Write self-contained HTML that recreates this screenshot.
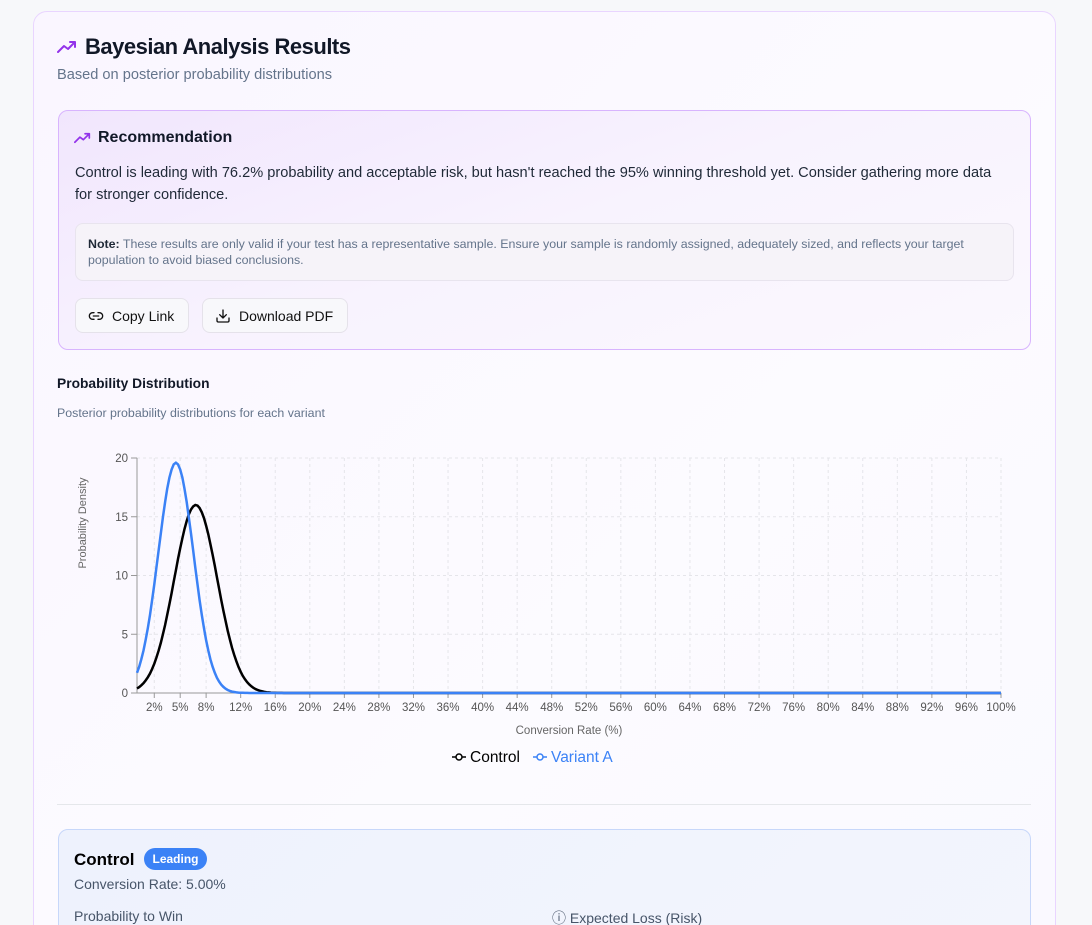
<!DOCTYPE html>
<html style="overflow:hidden;height:925px"><head><meta charset="utf-8"><style>
*{box-sizing:border-box;margin:0;padding:0}
body{width:1092px;height:925px;overflow:hidden;background:#f7f8fa;font-family:"Liberation Sans",sans-serif;position:relative}
.abs{position:absolute}
.card{left:33px;top:11px;width:1023px;height:930px;border:1px solid #e9d5ff;border-radius:14px;background:linear-gradient(135deg,#faf6ff,#fcfbff 60%,#faf9ff)}
.rec{left:58px;top:110px;width:973px;height:240px;border:1px solid #d8b4fe;border-radius:10px;background:linear-gradient(160deg,#f1e6fd,#f8f3fe 50%,#fbf8fe)}
.note{left:75px;top:223px;width:939px;height:58px;border:1px solid #e8e4ee;border-radius:8px;background:#f6f3f9;font-size:12.4px;color:#64748b;line-height:16px;padding:12px 12px}
.btn{top:298px;height:35px;border:1px solid #e5e2ea;border-radius:8px;background:#f8f8fb;font-size:14px;color:#111;display:flex;align-items:center;padding-left:12px;gap:8px}
.ctl{left:58px;top:829px;width:973px;height:120px;border:1px solid #c7d7fa;border-radius:10px;background:linear-gradient(135deg,#eef2fd,#f3f5fd)}
</style></head><body>
<div class="abs card"></div>
<svg class="abs" style="left:57px;top:40px" width="20" height="14" viewBox="0 0 20 14"><path d="M1 12 L7 6 L11 9 L18 2 M13 2 H18 V7" fill="none" stroke="#9333ea" stroke-width="2" stroke-linecap="round" stroke-linejoin="round"/></svg>
<div class="abs" style="left:85px;top:34px;font-size:22px;font-weight:bold;color:#111827;letter-spacing:-0.5px">Bayesian Analysis Results</div>
<div class="abs" style="left:57px;top:67px;font-size:14.6px;color:#64748b">Based on posterior probability distributions</div>
<div class="abs rec"></div>
<svg class="abs" style="left:74px;top:132px" width="17" height="12" viewBox="0 0 20 14"><path d="M1 12 L7 6 L11 9 L18 2 M13 2 H18 V7" fill="none" stroke="#9333ea" stroke-width="2" stroke-linecap="round" stroke-linejoin="round"/></svg>
<div class="abs" style="left:98px;top:129px;font-size:16px;font-weight:bold;color:#111827">Recommendation</div>
<div class="abs" style="left:75px;top:162px;width:930px;font-size:14.6px;line-height:22px;color:#1f2937">Control is leading with 76.2% probability and acceptable risk, but hasn't reached the 95% winning threshold yet. Consider gathering more data for stronger confidence.</div>
<div class="abs note"><b style="color:#1f2937">Note:</b> These results are only valid if your test has a representative sample. Ensure your sample is randomly assigned, adequately sized, and reflects your target population to avoid biased conclusions.</div>
<div class="abs btn" style="left:75px;width:114px"><svg width="16" height="16" viewBox="0 0 24 24" fill="none" stroke="#111" stroke-width="2" stroke-linecap="round"><path d="M9 17H7A5 5 0 0 1 7 7h2M15 7h2a5 5 0 1 1 0 10h-2M8 12h8"/></svg>Copy Link</div>
<div class="abs btn" style="left:202px;width:146px"><svg width="16" height="16" viewBox="0 0 24 24" fill="none" stroke="#111" stroke-width="2" stroke-linecap="round" stroke-linejoin="round"><path d="M21 15v4a2 2 0 0 1-2 2H5a2 2 0 0 1-2-2v-4M7 10l5 5 5-5M12 15V3"/></svg>Download PDF</div>
<div class="abs" style="left:57px;top:376px;font-size:13.8px;font-weight:bold;color:#111827">Probability Distribution</div>
<div class="abs" style="left:57px;top:406px;font-size:12.4px;color:#64748b">Posterior probability distributions for each variant</div>
<svg class="abs" style="left:0;top:440px" width="1092" height="340" id="ch"></svg>
<div class="abs" style="left:57px;top:804px;width:974px;height:1px;background:#e5e7eb"></div>
<div class="abs ctl"></div>
<div class="abs" style="left:74px;top:850px;font-size:17px;font-weight:bold;color:#000">Control</div>
<div class="abs" style="left:144px;top:848px;width:63px;height:22px;border-radius:11px;background:#3b82f6;color:#fff;font-size:12px;font-weight:bold;text-align:center;line-height:22px">Leading</div>
<div class="abs" style="left:74px;top:876px;font-size:14px;color:#475569">Conversion Rate: 5.00%</div>
<div class="abs" style="left:74px;top:908px;font-size:14px;color:#475569">Probability to Win</div>
<div class="abs" style="left:552px;top:908px;font-size:14px;color:#475569">ⓘ Expected Loss (Risk)</div>
<script>
var s=document.getElementById('ch'),o='';
var X=function(p){return 137+8.64*p},Y=function(v){return 253-11.75*v};
var ticks=[2,5,8,12,16,20,24,28,32,36,40,44,48,52,56,60,64,68,72,76,80,84,88,92,96,100];
ticks.forEach(function(t){o+='<line x1="'+X(t)+'" y1="18" x2="'+X(t)+'" y2="253" stroke="#e5e5ea" stroke-dasharray="3 3"/>';
o+='<line x1="'+X(t)+'" y1="253" x2="'+X(t)+'" y2="258" stroke="#999"/>';
o+='<text x="'+X(t)+'" y="271" font-size="11.5" fill="#555" text-anchor="middle" font-family="Liberation Sans">'+t+'%</text>';});
[0,5,10,15,20].forEach(function(v){if(v>0)o+='<line x1="137" y1="'+Y(v)+'" x2="1001" y2="'+Y(v)+'" stroke="#e5e5ea" stroke-dasharray="3 3"/>';
o+='<line x1="131" y1="'+Y(v)+'" x2="137" y2="'+Y(v)+'" stroke="#999"/><text x="128" y="'+(Y(v)+4)+'" font-size="11.5" fill="#555" text-anchor="end" font-family="Liberation Sans">'+v+'</text>';});
o+='<line x1="137" y1="18" x2="137" y2="253" stroke="#999"/><line x1="137" y1="253" x2="1001" y2="253" stroke="#999"/>';
function c(m,sd,pk,col){var d='';for(var p=0;p<=100;p+=0.25){var v=pk*Math.exp(-(p-m)*(p-m)/(2*sd*sd));d+=(p?'L':'M')+X(p).toFixed(1)+' '+Y(v).toFixed(1);}return '<path d="'+d+'" fill="none" stroke="'+col+'" stroke-width="2.5"/>';}
o+=c(6.8,2.49,16,'#000')+c(4.5,2.04,19.6,'#3b82f6');
o+='<text x="569" y="294" font-size="11.5" fill="#666" text-anchor="middle" font-family="Liberation Sans">Conversion Rate (%)</text>';
o+='<text transform="translate(86,83) rotate(-90)" font-size="11" fill="#666" text-anchor="middle" font-family="Liberation Sans">Probability Density</text>';
o+='<line x1="452" y1="317" x2="466" y2="317" stroke="#000" stroke-width="1.5"/><circle cx="459" cy="317" r="3" fill="#fff" stroke="#000" stroke-width="1.5"/><text x="470" y="322" font-size="15.5" fill="#000" font-family="Liberation Sans">Control</text>';
o+='<line x1="533" y1="317" x2="547" y2="317" stroke="#3b82f6" stroke-width="1.5"/><circle cx="540" cy="317" r="3" fill="#fff" stroke="#3b82f6" stroke-width="1.5"/><text x="551" y="322" font-size="15.5" fill="#3b82f6" font-family="Liberation Sans">Variant A</text>';
s.innerHTML=o;
</script>
</body></html>
